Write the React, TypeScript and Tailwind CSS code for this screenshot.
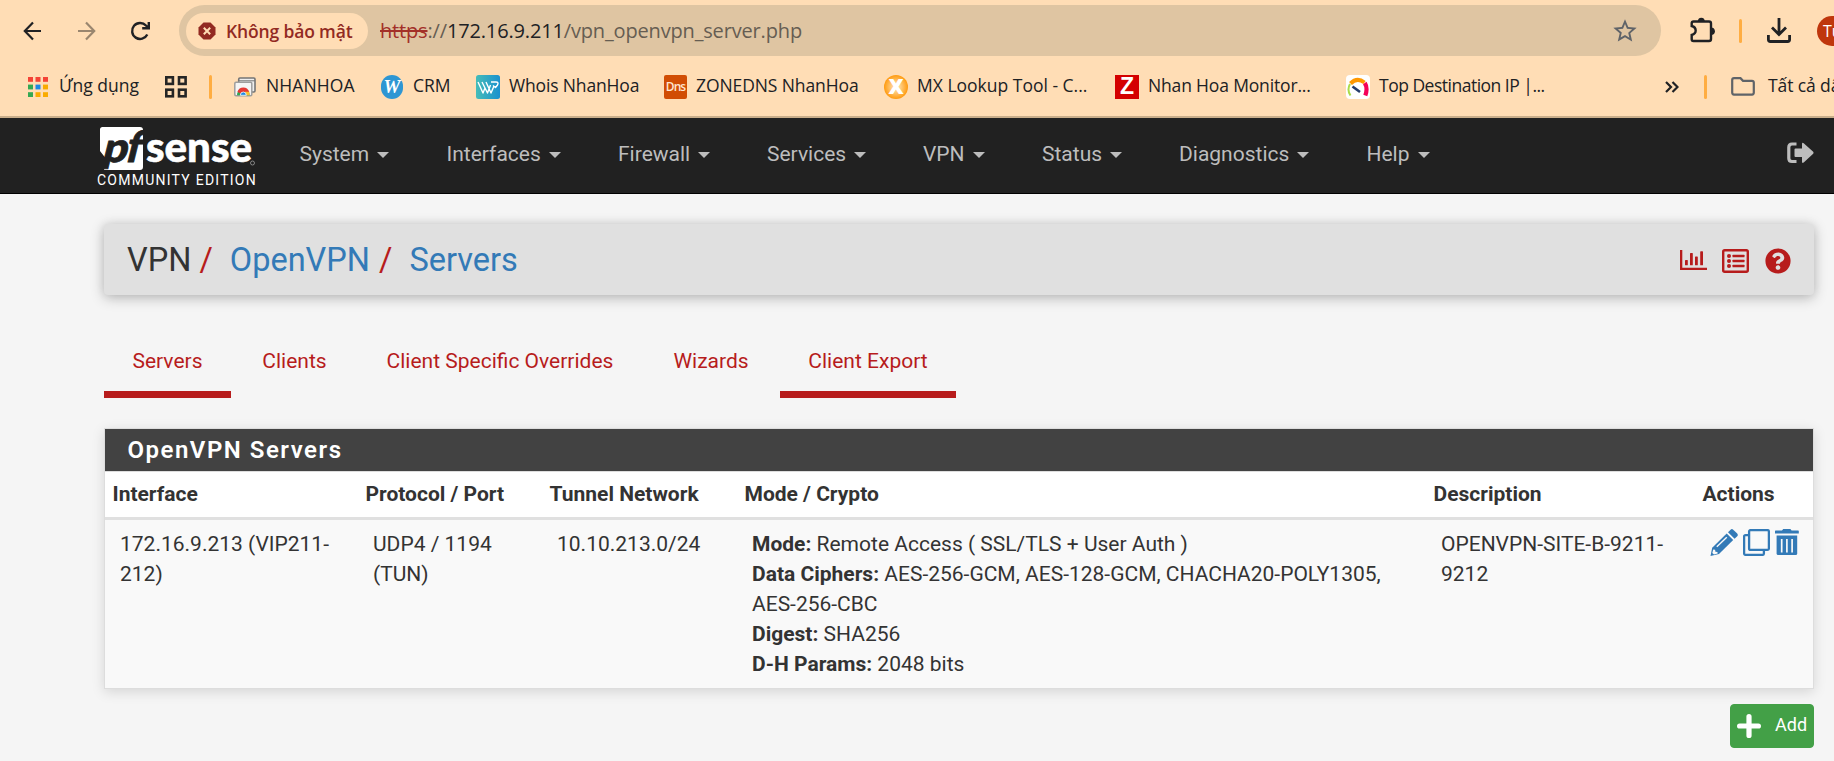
import React from "react";
import { FaQuestionCircle } from "react-icons/fa";
import { MdStarBorder } from "react-icons/md";

const menu: [string, string][] = [
  ["System", "w-[147px]"],
  ["Interfaces", "w-[171.5px]"],
  ["Firewall", "w-[149px]"],
  ["Services", "w-[156px]"],
  ["VPN", "w-[119px]"],
  ["Status", "w-[137px]"],
  ["Diagnostics", "w-[187.5px]"],
  ["Help", "w-[100px]"],
];

const tabs: [string, string, boolean][] = [
  ["Servers", "w-[127px]", true],
  ["Clients", "w-[121px]", false],
  ["Client Specific Overrides", "w-[284px]", false],
  ["Wizards", "w-[132px]", false],
  ["Client Export", "w-[176px]", true],
];

function AppsIcon() {
  const colors = ["#f44336", "#f44336", "#f44336", "#34a853", "#1e88e5", "#f9ab00", "#34a853", "#f9ab00", "#f9ab00"];
  return (
    <svg width="20" height="20" viewBox="0 0 20 20">
      {colors.map((c, i) => (
        <rect key={i} x={(i % 3) * 7.5} y={Math.floor(i / 3) * 7.6} width="5" height="4.8" fill={c} />
      ))}
    </svg>
  );
}

function SquaresIcon() {
  return (
    <svg width="22" height="22" viewBox="0 0 22 22" fill="none" stroke="#252525" strokeWidth="2.6">
      <rect x="1.3" y="1.3" width="6.6" height="6.6" />
      <rect x="14" y="1.3" width="6.6" height="6.6" />
      <rect x="1.3" y="13.7" width="6.6" height="6.6" />
      <rect x="14" y="13.7" width="6.6" height="6.6" />
    </svg>
  );
}

function StoreIcon() {
  return (
    <svg width="22" height="22" viewBox="0 0 22 22">
      <rect x="4.7" y="2" width="16.3" height="14" rx="1.2" fill="#eee" stroke="#757575" strokeWidth="1.6" />
      <path d="M4 4.8h17" stroke="#757575" strokeWidth="1" />
      <rect x="0.8" y="6.3" width="17" height="13.5" rx="1.2" fill="#f5f5f5" stroke="#9e9e9e" strokeWidth="1.5" />
      <path d="M3 19.3a6.3 6.8 0 0 1 12.6 0z" fill="#34a853" />
      <path d="M3.4 15.8a6.3 6.8 0 0 1 11.8 0L11 18H7z" fill="#e53935" />
      <path d="M15.2 15.8q.6 1.6.4 3.5h-5.6l1-3.5z" fill="#fbc02d" />
      <path d="M6.3 19.3a3 3.3 0 0 1 6 0z" fill="#1e88e5" stroke="#fff" strokeWidth=".8" />
    </svg>
  );
}

function GaugeIcon() {
  return (
    <svg width="24" height="24" viewBox="0 0 24 24" fill="none">
      <rect width="24" height="24" rx="4" fill="#fff" />
      <path d="M4.5 20.5A11 11 0 0 1 4 9" stroke="#aadc4b" strokeWidth="2" />
      <path d="M4.5 8.5Q11 1.8 18.5 7.500" stroke="#ff9800" strokeWidth="4" />
      <path d="M18.8 8Q22 13 19.3 20.5" stroke="#f50057" strokeWidth="4.2" />
      <path d="M6.5 11.5l7.5 5.5" stroke="#263c6b" strokeWidth="2.6" />
    </svg>
  );
}

function Favicon({ kind }: { kind: string }) {
  if (kind === "store") return <StoreIcon />;
  if (kind === "gauge") return <GaugeIcon />;
  if (kind === "crm")
    return (
      <span className="flex h-6 w-[22px] items-center justify-center rounded-full bg-[#2e96d3] font-['Liberation_Serif',serif] text-[19px] font-bold italic leading-none text-white">W</span>
    );
  if (kind === "whois")
    return (
      <svg width="24" height="24" viewBox="0 0 24 24" fill="none">
        <defs>
          <linearGradient id="whois"><stop stopColor="#45bcb8" /><stop offset="1" stopColor="#1b91cf" /></linearGradient>
        </defs>
        <rect width="24" height="24" rx="2.5" fill="url(#whois)" />
        <path d="M2 7l5 11 2-5-3-6M6 7l5.5 11 3-8M10 7l5 11 3-7M15 7h5q3 0 1.5 3l-2 2.5-2.5-2" stroke="#fff" strokeWidth="1.4" strokeLinejoin="round" />
      </svg>
    );
  if (kind === "dns")
    return (
      <span className="flex h-6 w-[23px] items-center justify-center rounded-[2px] bg-[#d14d04] font-['Open_Sans',sans-serif] text-[12px] font-semibold leading-none tracking-[-1px] text-[#ffe5d0]">Dns</span>
    );
  if (kind === "mx")
    return (
      <span className="flex size-6 items-center justify-center rounded-full bg-[radial-gradient(circle,#ffd089_25%,#ff9c12_70%)] font-['Open_Sans',sans-serif] text-[21px] font-extrabold leading-none text-white">X</span>
    );
  return (
    <span className="flex size-6 items-center justify-center bg-[#d40000] font-['Liberation_Sans',sans-serif] text-[23px] font-bold leading-none text-white">Z</span>
  );
}

const bookmarks: [string, string, string, string][] = [
  ["store", "NHANHOA", "w-[147px]", "ml-[10px] tracking-[0.1px]"],
  ["crm", "CRM", "w-[95px]", "ml-[10px]"],
  ["whois", "Whois NhanHoa", "w-[188px]", "ml-[9px] tracking-[-0.15px]"],
  ["dns", "ZONEDNS NhanHoa", "w-[220px]", "ml-[9px] tracking-[-0.1px]"],
  ["mx", "MX Lookup Tool - C...", "w-[231px]", "ml-[9px] tracking-[0px]"],
  ["z", "Nhan Hoa Monitor...", "w-[231px]", "ml-[9px] tracking-[-0.16px]"],
  ["gauge", "Top Destination IP |...", "w-[319px]", "ml-[9px] tracking-[-0.5px]"],
];

function PuzzleIcon() {
  return (
    <svg className="ml-[29px] mt-[-2px] shrink-0" width="26" height="26" viewBox="0 0 26 26">
      <path d="M3.5 4.5h15.5q2 0 2 2v15.5q0 2-2 2H3.5q-1.8 0-1.8-1.8v-4.2c5.3-1.5 5.3-7.5 0-9V6.3q0-1.8 1.8-1.8z" fill="none" stroke="#202124" strokeWidth="2.4" />
      <path d="M7.8 4.5a3.5 3.8 0 0 1 7 0z" fill="#202124" />
      <path d="M21 10.5a3.9 3.8 0 0 1 0 7.6z" fill="#202124" />
    </svg>
  );
}

function BrowserBar() {
  return (
    <header className="h-[118px] overflow-hidden border-b-2 border-[#c9ae8b] bg-[#ffddb5] font-['Open_Sans','Noto_Sans',sans-serif] text-[#202124]">
      <div className="flex h-[61px] w-[1860px] items-center">
        <svg className="ml-[23px] mt-[1px]" width="19" height="22" viewBox="0 0 19 22" fill="none" stroke="#202124" strokeWidth="2.2">
          <path d="M18 11H2M10 2.5L1.8 11l8.2 8.5" />
        </svg>
        <svg className="ml-[35px] mt-[1px]" width="19" height="22" viewBox="0 0 19 22" fill="none" stroke="#9a866f" strokeWidth="2.2">
          <path d="M1 11h16M9 2.5l8.2 8.5L9 19.5" />
        </svg>
        <svg className="ml-[34px]" width="21" height="20" viewBox="0 0 21 20" fill="none" stroke="#202124" strokeWidth="2.4">
          <path d="M17.3 13.5A8 8 0 1 1 16 4.5l2.3 2.3M18.8 1v6.3h-6.6" />
        </svg>
        <div className="ml-7 flex h-[51px] w-[1482px] items-center rounded-full bg-[#dfc5a2] pl-[7px]">
          <div className="flex h-9 w-[182px] shrink-0 items-center rounded-full bg-[#ffddb5] pl-3">
            <svg width="18" height="18" viewBox="0 0 18 18">
              <path d="M5.5.5h7l5 5v7l-5 5h-7l-5-5v-7z" fill="#922a22" />
              <path d="M5.8 5.8l6.4 6.4M12.2 5.8l-6.4 6.4" stroke="#ffddb5" strokeWidth="2" />
            </svg>
            <span className="ml-[10px] whitespace-nowrap text-[17.5px] font-semibold tracking-[-0.15px] text-[#922a22]">Không bảo mật</span>
          </div>
          <span className="ml-3 whitespace-nowrap text-[20px] tracking-[-0.16px] text-[#665d52]">
            <span className="text-[#a33028] line-through">https</span>://<span className="text-[#202124]">172.16.9.211</span>/vpn_openvpn_server.php
          </span>
          <MdStarBorder className="ml-auto mr-[22px] size-7 text-[#5f6368]" />
        </div>
        <PuzzleIcon />
        <span className="ml-[23px] h-6 w-[3px] rounded-full bg-[#ffad42]" />
        <svg className="ml-[25px]" width="24" height="25" viewBox="0 0 24 25" fill="none" stroke="#202124" strokeWidth="2.8">
          <path d="M12 0v16M5 9.5l7 7 7-7M1.4 17v4.5q0 2 2 2h17.2q2 0 2-2V17" />
        </svg>
        <span className="ml-[26px] flex size-[30px] shrink-0 items-center rounded-full bg-[#bf360c] pl-[6px] text-[16px] text-white">Tu</span>
      </div>
      <div className="flex h-[51px] w-[1900px] items-center whitespace-nowrap text-[17.5px]">
        <div className="flex w-[165px] items-center pl-7"><AppsIcon /><span className="mb-[3px] ml-[11px]">Ứng dụng</span></div>
        <div className="w-[44px]"><SquaresIcon /></div>
        <span className="mr-[22px] h-6 w-[3px] rounded-full bg-[#ffad42]" />
        {bookmarks.map(([kind, label, w, text]) => (
          <div key={label} className={`flex shrink-0 items-center ${w}`}>
            <Favicon kind={kind} />
            <span className={`mb-[3px] ${text}`}>{label}</span>
          </div>
        ))}
        <svg width="14" height="12" viewBox="0 0 14 12" fill="none" stroke="#202124" strokeWidth="2.2"><path d="M1 1l5 5-5 5M7.5 1l5 5-5 5" /></svg>
        <span className="ml-[25px] h-6 w-[3px] rounded-full bg-[#ffad42]" />
        <svg className="ml-[24px]" width="24" height="19" viewBox="0 0 24 19" fill="none" stroke="#5f6368" strokeWidth="2.2"><path d="M1.2 3q0-1.8 1.8-1.8h6.5l2.5 2.6h9q1.8 0 1.8 1.8v10q0 2-1.8 2H3q-1.8 0-1.8-2z" /></svg>
        <span className="mb-[3px] ml-[13px] tracking-[-0.1px]">Tất cả dấu trang</span>
      </div>
    </header>
  );
}

function Logo() {
  return (
    <div className="ml-[97px] flex w-[202px] flex-col pt-[9px]">
      <div className="ml-[3px] flex h-[43px] items-center">
        <svg width="156" height="43" viewBox="0 0 156 43">
          <path d="M2.5 0H40q3 0 3 3v37q0 3-3 3H4L7 33 0 24V2.500Q0 0 2.5 0z" fill="#fff" />
          <g fontFamily="Lato" fontWeight="900" fill="#212121" stroke="#212121" strokeWidth=".8">
            <text transform="translate(1 35) skewX(-14)" fontSize="41" textLength="25" lengthAdjust="spacingAndGlyphs">p</text>
            <text transform="translate(24 35) skewX(-14)" fontSize="43" textLength="15" lengthAdjust="spacingAndGlyphs">f</text>
          </g>
          <text x="46" y="35" fontFamily="Lato" fontWeight="900" fontSize="42" fill="#fff" stroke="#fff" strokeWidth=".6" textLength="106" lengthAdjust="spacingAndGlyphs">sense</text>
          <circle cx="152.5" cy="36" r="2" fill="none" stroke="#aaa" strokeWidth=".7" />
        </svg>
      </div>
      <span className="mt-[2px] whitespace-nowrap text-[14px] leading-[16px] tracking-[1.25px] text-white">COMMUNITY EDITION</span>
    </div>
  );
}

function NavBar() {
  return (
    <nav className="flex h-[76px] border-b border-black bg-[#212121]">
      <Logo />
      {menu.map(([label, w]) => (
        <a key={label} className={`relative left-[0.5px] flex h-[72px] shrink-0 items-center text-[21px] text-[#bdbdbd] ${w}`}>
          {label}
          <span className="ml-2 mt-[2px] border-x-6 border-t-6 border-x-transparent border-t-[#bdbdbd]" />
        </a>
      ))}
      <svg className="ml-auto mr-5 mt-[24px]" width="27" height="22" viewBox="0 0 27 22" fill="#bdbdbd">
        <path d="M9.5 2H5Q1.8 2 1.8 5.2v11Q1.8 19.5 5 19.5h4.5" fill="none" stroke="#bdbdbd" strokeWidth="3.2" />
        <path d="M7.5 7.5q0-1 1-1H15V2q0-2 1.7-.8l9.5 8.600q.8 1 0 2l-9.5 8.700Q15 21.700 15 19.800V15H8.500q-1 0-1-1z" />
      </svg>
    </nav>
  );
}

function ChartIcon() {
  return (
    <svg width="27" height="20" viewBox="0 0 27 20" fill="#b71c1c">
      <path d="M0 0h2.300v17.800H27V20H0z" />
      <rect x="5" y="10" width="2.8" height="5.3" rx=".6" />
      <rect x="10" y="3" width="2.8" height="12.3" rx=".6" />
      <rect x="15" y="6.5" width="2.8" height="8.8" rx=".6" />
      <rect x="20.2" y="1.3" width="2.8" height="14" rx=".6" />
    </svg>
  );
}

function ListIcon() {
  return (
    <svg width="27" height="24" viewBox="0 0 27 24" fill="#b71c1c">
      <rect x="1.2" y="1.2" width="24.6" height="21.6" rx="1.5" fill="none" stroke="#b71c1c" strokeWidth="2.4" />
      {[7, 12, 17].map((y) => (
        <g key={y}>
          <circle cx="7" cy={y} r="2" />
          <rect x="10.5" y={y - 1.2} width="12" height="2.4" rx=".5" />
        </g>
      ))}
    </svg>
  );
}

function PencilIcon() {
  return (
    <svg width="28" height="27" viewBox="0 0 28 27" fill="#337ab7">
      <path d="M18 3.200l2.600-2.500q1.300-1.200 2.600 0l4 3.900q1.200 1.300 0 2.600L24.600 9.700z" />
      <path d="M16.700 4.600l6.500 6.400L9 25 .5 27 2.200 18.700z" />
      <path d="M3.200 20.500l1.900.3.300 2 2 .3.300 1.500-3.700.9-1.700-1.600z" fill="#f9f9f9" />
      <path d="M6.800 17.800L16.800 8.200" stroke="#f9f9f9" strokeWidth="1.400" />
    </svg>
  );
}

function CloneIcon() {
  return (
    <svg width="27" height="27" viewBox="0 0 27 27" fill="none" stroke="#337ab7" strokeWidth="2.3">
      <rect x="6.1" y="1.1" width="19.8" height="19.8" rx="1.5" />
      <path d="M6 6.100H2.600q-1.500 0-1.500 1.500v16.800q0 1.500 1.500 1.500h16.800q1.500 0 1.500-1.500V21" />
    </svg>
  );
}

function TrashIcon() {
  return (
    <svg width="24" height="27" viewBox="0 0 24 27" fill="#337ab7">
      <path d="M0 2.200q0-.6.600-.6H7L8.200 0h7.200l1.200 1.600h6.600q.6 0 .6.600v2.400H0z" />
      <path d="M1.600 6.500h20.600v18q0 1.500-1.500 1.500H3.100q-1.500 0-1.500-1.500z" />
      <path d="M6.700 10v13.500M11.900 10v13.500M17.100 10v13.500" stroke="#f9f9f9" strokeWidth="1.7" />
    </svg>
  );
}

export default function App() {
  return (
    <div className="h-[761px] w-[1834px] overflow-hidden bg-[#f5f5f5] font-[Roboto,sans-serif] text-[21px] leading-[30px] text-[#333]">
      <BrowserBar />
      <NavBar />
      <main className="ml-[104px] w-[1710px] pt-[30px]">
        <div className="flex h-[71px] items-center rounded-[4px] bg-[#e0e0e0] pl-[23px] pr-[23px] text-[32.5px] shadow-[0_3px_14px_rgba(0,0,0,0.24),0_0_10px_rgba(0,0,0,0.08)]">
          <div className="flex pt-px">
            <span className="whitespace-nowrap text-[#333]">VPN</span>
            <span className="ml-[8px] text-[#b71c1c]">/</span>
            <span className="ml-[17px] text-[#337ab7]">OpenVPN</span>
            <span className="ml-[9px] text-[#b71c1c]">/</span>
            <span className="ml-[17px] text-[#337ab7]">Servers</span>
          </div>
          <div className="ml-auto flex items-center text-[#b71c1c]">
            <ChartIcon />
            <span className="ml-[15px] mt-[2px]"><ListIcon /></span>
            <FaQuestionCircle className="ml-4 mt-[2px] size-[26px]" />
          </div>
        </div>
        <div className="mt-[37px] flex h-[66px] gap-[3px]">
          {tabs.map(([label, w, on]) => (
            <a key={label} className={`flex shrink-0 justify-center whitespace-nowrap pt-[14px] text-[#b71c1c] ${w} ${on ? "border-b-[7px] border-[#b71c1c]" : ""}`}>{label}</a>
          ))}
        </div>
        <section className="mt-[30px] h-[261px] w-[1710px] border border-[#ddd] bg-[#f9f9f9] shadow-[0_3px_12px_rgba(0,0,0,0.13)]">
          <h2 className="flex h-[43px] items-center border-b border-[#ddd] bg-[#424242] pl-[22.5px] text-[24px] font-semibold tracking-[1.5px] text-white">OpenVPN Servers</h2>
          <div className="grid h-[48px] grid-cols-[253px_184px_195px_689px_269px_1fr] border-b-[3px] border-[#e0e0e0] bg-white pl-[7.5px] pt-[7px] font-bold">
            <span>Interface</span><span>Protocol / Port</span><span>Tunnel Network</span><span>Mode / Crypto</span><span>Description</span><span>Actions</span>
          </div>
          <div className="grid grid-cols-[253px_184px_195px_689px_269px_1fr] pl-[15px] pt-[9px]">
            <div>172.16.9.213 (VIP211-<br />212)</div>
            <div>UDP4 / 1194<br />(TUN)</div>
            <div>10.10.213.0/24</div>
            <div>
              <b>Mode:</b> Remote Access ( SSL/TLS + User Auth )<br />
              <b>Data Ciphers:</b> AES-256-GCM, AES-128-GCM, CHACHA20-POLY1305,<br />
              AES-256-CBC<br />
              <b>Digest:</b> SHA256<br />
              <b>D-H Params:</b> 2048 bits
            </div>
            <div>OPENVPN-SITE-B-9211-<br />9212</div>
            <div className="flex gap-[5px]">
              <PencilIcon />
              <CloneIcon />
              <TrashIcon />
            </div>
          </div>
        </section>
        <button className="ml-auto mt-[15px] flex h-11 w-[84px] items-center rounded-[4px] border border-[#43a047] bg-[#43a047] pl-[6px] text-[18px] text-white">
          <svg width="24" height="24" viewBox="0 0 24 24" fill="none" stroke="#fff" strokeWidth="5.2" strokeLinecap="round"><path d="M12 2.600v18.800M2.600 12h18.800" /></svg>
          <span className="mb-[2px] ml-[14px]">Add</span>
        </button>
      </main>
    </div>
  );
}
